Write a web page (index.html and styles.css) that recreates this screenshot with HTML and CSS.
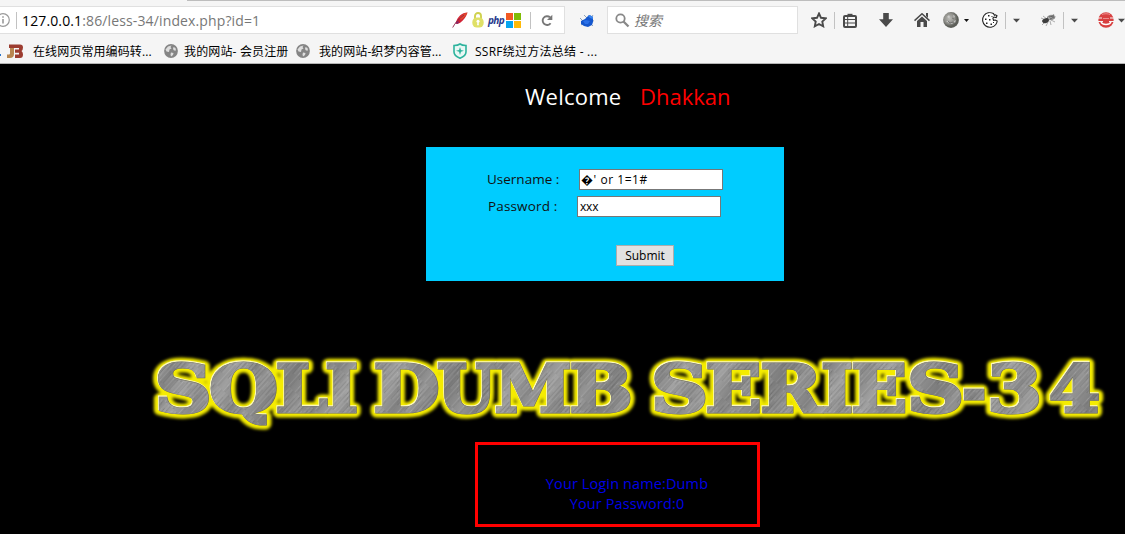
FILE: index.html
```html
<!DOCTYPE html>
<html lang="zh-CN">
<head>
<meta charset="utf-8">
<title>Less-34</title>
<link rel="stylesheet" href="styles.css">
</head>
<body>
<svg class="defs" width="0" height="0" aria-hidden="true">
  <defs>
    <symbol id="globe" viewBox="0 0 14 14"><circle cx="7" cy="7" r="6.900" fill="#858585"/><path d="M1.500 5.500L4 2.500l3.500-1L6.500 3l1 1.500-2 1L5 8 2.500 7.500zM9.500 3l2 1 .5 2.500-2 0-1-1.500zM7 8.500l2.500.5-.5 2-2 1.500-.5-2z" fill="#dedede"/></symbol>
    <symbol id="caret" viewBox="0 0 8 5"><path d="M0 .5h8L4 4.700z" fill="#4a4a4a"/></symbol>
  </defs>
</svg>
<header class="chrome">
  <div class="tabline"></div>
  <div class="nav">
    <div class="urlbar">
      <svg class="info" width="14" height="14" viewBox="0 0 14 14"><circle cx="7" cy="7" r="6.300" fill="none" stroke="#9a9a9a" stroke-width="1.200"/><path d="M7 6v4.500M7 3.300v1.500" stroke="#999" stroke-width="1.600"/></svg>
      <i class="sep url-sep"></i>
      <span class="url"><b>127.0.0.1</b>:86/less-34/index.php?id=1</span>
      <svg class="feather" width="16" height="16" viewBox="0 0 16 16"><path d="M15.500.5C10 .5 5 5 3.500 11.500l2 .5C10 10 14 6 15.500.5z" fill="#d22335"/><path d="M15.500.5C12 1.300 9 3.500 7 6l2 2c3-2 5-4.500 6.500-7.500z" fill="#e75b27" opacity=".65"/><path d="M3.500 11l2.500-2 1 1.500-2 1.500z" fill="#7b2a72"/><path d="M.7 15.500C3 11 7 6.500 12 3" fill="none" stroke="#8e2349" stroke-width=".9"/></svg>
      <svg class="lock" width="12" height="16" viewBox="0 0 12 16"><path d="M3 7V4a3 3 0 016 0v3" fill="none" stroke="#cfd14e" stroke-width="1.900"/><rect x=".3" y="5.500" width="11.400" height="10" rx="4.500" fill="#dfe067"/><circle cx="6" cy="9.300" r="1.500" fill="#fff"/><path d="M5.400 10h1.200l.3 3.200H5.100z" fill="#fff"/></svg>
      <span class="php">php</span>
      <svg class="windows" width="15" height="15" viewBox="0 0 15 15"><path fill="#f25a24" d="M0 0h7v7H0z"/><path fill="#80bc06" d="M8 0h7v7H8z"/><path fill="#05a6f0" d="M0 8h7v7H0z"/><path fill="#ffba08" d="M8 8h7v7H8z"/></svg>
      <i class="sep reload-sep"></i>
      <svg class="reload" width="12" height="13" viewBox="0 0 12 13"><path d="M9.600 9.200A4.400 4.400 0 119 3.300" fill="none" stroke="#777" stroke-width="1.900"/><path d="M11.300.7v5.300H6z" fill="#777"/></svg>
    </div>
    <svg class="bug" width="16" height="15" viewBox="0 0 16 15"><path d="M1 5l3 3M2 12l3-2M5 2l3 3M15 8l-3-1M14 13l-3-3M14 2l-2 3" stroke="#8fa3b8" stroke-width="1"/><path d="M2 8l4-2 2-2 2-2 4 2v5l-1 3-4 2-4-1-3-2z" fill="#1557cd"/><path d="M9 3l2-1 3 2v2l-3-1z" fill="#3984ee"/><path d="M4 8l3-1 4 1-2 3-3 0z" fill="#2a70e8"/></svg>
    <div class="search">
      <svg width="15" height="15" viewBox="0 0 15 15"><circle cx="5.500" cy="5.500" r="4.200" fill="none" stroke="#888" stroke-width="1.800"/><path d="M8.500 8.500l5 5" stroke="#888" stroke-width="2.300"/></svg>
      <span>搜索</span>
    </div>
    <svg class="star" width="16" height="16" viewBox="0 0 16 16"><path d="M8 1.500l2 4.300 4.700.6-3.400 3.200.9 4.700L8 12l-4.200 2.300.9-4.700L1.300 6.400 6 5.800z" fill="none" stroke="#4a4a4a" stroke-width="1.900"/></svg>
    <i class="sep s1"></i>
    <svg class="list" width="14" height="15" viewBox="0 0 14 15"><path d="M4.500 3V.8h5V3" fill="#4a4a4a"/><rect x="1" y="3" width="12" height="11" rx="1" fill="none" stroke="#4a4a4a" stroke-width="2"/><path d="M2 6.500h10M2 10h10" stroke="#4a4a4a" stroke-width="1.200"/><path d="M4.700 3v11" stroke="#4a4a4a"/></svg>
    <svg class="down" width="14" height="14" viewBox="0 0 14 14"><path d="M4.200 0h5.600v6.300H14L7 14 0 6.300h4.200z" fill="#4a4a4a"/></svg>
    <svg class="home" width="16" height="14" viewBox="0 0 16 14"><path d="M.5 7.600L8 .8l7.500 6.800" fill="none" stroke="#4a4a4a" stroke-width="1.500"/><path d="M12 0h2v5l-2-2zM3 7.900l5-4.500 5 4.500V14H9.500V9h-3v5H3z" fill="#4a4a4a"/></svg>
    <svg class="ball" width="16" height="16" viewBox="0 0 16 16"><defs><radialGradient id="ballfill" cx=".4" cy=".4"><stop offset="0" stop-color="#bdbdb9"/><stop offset=".65" stop-color="#8f8f8a"/><stop offset="1" stop-color="#5c5e58"/></radialGradient></defs><circle cx="8" cy="8" r="7.900" fill="url(#ballfill)"/><path d="M4 5l2-2 1 2-1 1zM10 3l2 1-1 2M3 9l2 0 1 2M11 9l2-1-1 3-1-1zM7 12l2-1 1 1z" fill="#ddd" opacity=".7"/><path d="M5 9l2 2 3-1M9 6l2 1" stroke="#666" fill="none" stroke-width=".7"/></svg>
    <svg class="mini" width="5" height="3"><path d="M0 0h5L2.500 3z" fill="#111"/></svg>
    <svg class="cookie" width="16" height="16" viewBox="0 0 16 16"><path d="M11.500 1.600C8 0 4 .7 2 3.500-.3 7 .4 11.500 3.500 13.800c3.500 2.500 8 1.600 10.300-1.300.8-1 1.200-2.200 1.400-3.500l-2-1-1.700.4-.6-2.200 1-1.200 2.300.6.8-1.800-1.500-1-1 .5z" fill="#fff" stroke="#222" stroke-width="1.100"/><path d="M6 3h1.500v1.500H6zM3 6.500h1.500V8H3zM7 7h1.500v1.500H7zM4 10.500h1.500V12H4zM8.500 11.500H10V13H8.500zM11 10h1v1h-1zM9.500 4h1v1h-1z" fill="#222"/></svg>
    <i class="sep s2"></i>
    <svg class="caret c2" width="7" height="5"><use href="#caret"/></svg>
    <svg class="fly" width="16" height="14" viewBox="0 0 16 14"><path d="M1 5l5 2M2 12l4-4M6 13l2-4M11 12l-1-4M15 9l-4-2M3 3l4 3M14 1l-3 4" stroke="#999" stroke-width=".8"/><ellipse cx="11" cy="4.500" rx="4" ry="2.200" transform="rotate(-12 11 4)" fill="#aaa" stroke="#666" stroke-width=".6"/><ellipse cx="5.500" cy="7.500" rx="3.500" ry="2.400" transform="rotate(-20 6 7.500)" fill="#3c3c3c"/><path d="M9 4l5-1M10 6l4-2" stroke="#444" stroke-width=".7"/></svg>
    <i class="sep s3"></i>
    <svg class="caret c2" width="7" height="5"><use href="#caret"/></svg>
    <svg class="red" width="16" height="16" viewBox="0 0 16 16"><circle cx="8" cy="8" r="7.700" fill="#d84040"/><path d="M4 2.500c2-1 6-1 8 0" fill="none" stroke="#ec8e8e"/><path d="M0 6h4M12 6h4M0 9.500h5M11 9.500h5" stroke="#f5f5f5" stroke-width="1.200"/><path d="M5 6.500h6" stroke="#f0a0a0" stroke-width=".8"/><path d="M3 10c1.500 3.400 8.500 3.400 10 0" fill="none" stroke="#fff" stroke-width="1.500"/></svg>
    <svg class="caret c3" width="7" height="5"><use href="#caret"/></svg>
  </div>
  <div class="bookmarks">
    <i class="dot"></i>
    <svg class="jb" width="16" height="14" viewBox="0 0 16 14"><path d="M3 4h4v6q0 4-4 4H0v-3.500h2q1 0 1-1z" fill="#b88650"/><path d="M2 .5h11q3 0 3 3 0 2.300-1.500 3.500Q16 8 16 10.500q0 3.500-3 3.500H8v-3.500h4V8.700H8V5.500h4V4H2z" fill="#9c3c30"/></svg>
    <span class="b1">在线网页常用编码转...</span>
    <svg class="g1" width="14" height="14"><use href="#globe"/></svg>
    <span class="b2">我的网站- 会员注册</span>
    <svg class="g2" width="14" height="14"><use href="#globe"/></svg>
    <span class="b3">我的网站-织梦内容管...</span>
    <svg class="shield" width="14" height="16" viewBox="0 0 14 16"><path d="M7 1c2 1.500 4 1.500 6 1.500V9c0 3-3 5-6 6.200C4 14 1 12 1 9V2.500C3 2.500 5 2.500 7 1z" fill="#e9f8f5" stroke="#2db39d" stroke-width="1.600"/><path d="M7 4l1 3 3 .7-3 1L7 12 6 8.700l-3-1L6 7z" fill="#2db39d"/></svg>
    <span class="b4">SSRF绕过方法总结 - ...</span>
  </div>
</header>
<main class="page">
  <h1 class="welcome"><span class="hello">Welcome</span><span class="name">Dhakkan</span></h1>
  <form class="login">
    <div class="row user"><label for="u">Username :</label><input id="u" type="text" value="&#xFFFD;' or 1=1#"></div>
    <div class="row pass"><label for="p">Password :</label><input id="p" type="text" value="xxx"></div>
    <button type="button">Submit</button>
  </form>
  <svg class="banner" width="970" height="90" viewBox="145 345 970 90" role="img" aria-label="SQLI DUMB SERIES-34">
    <defs>
      <linearGradient id="metal" gradientUnits="userSpaceOnUse" x1="150" y1="340" x2="210" y2="376" spreadMethod="reflect">
        <stop offset="0" stop-color="#7c7c7c"/><stop offset=".3" stop-color="#949494"/><stop offset=".5" stop-color="#828282"/><stop offset=".75" stop-color="#a0a0a0"/><stop offset="1" stop-color="#8a8a8a"/>
      </linearGradient>
      <pattern id="brush" width="9" height="47" patternUnits="userSpaceOnUse" patternTransform="rotate(42)">
        <path d="M1 0v34M4.700 10v37M7 0v15" stroke="#fff" stroke-opacity=".16" stroke-width=".7"/><path d="M2.800 0v22M6 20v27M8.300 5v30" stroke="#333" stroke-opacity=".2" stroke-width=".7"/>
      </pattern>
      <filter id="glow" filterUnits="userSpaceOnUse" x="145" y="345" width="970" height="90"><feGaussianBlur stdDeviation="1.600"/></filter>
      <g id="letters">
        <text x="154.500" y="411.500" textLength="57" lengthAdjust="spacingAndGlyphs">S</text>
        <text x="209" y="411.500" textLength="69" lengthAdjust="spacingAndGlyphs">Q</text>
        <text x="275.500" y="411.500" textLength="52" lengthAdjust="spacingAndGlyphs">L</text>
        <text x="325" y="411.500" textLength="33" lengthAdjust="spacingAndGlyphs">I</text>
        <text x="373.500" y="411.500" textLength="66" lengthAdjust="spacingAndGlyphs">D</text>
        <text x="437" y="411.500" textLength="59" lengthAdjust="spacingAndGlyphs">U</text>
        <text x="494.500" y="411.500" textLength="77" lengthAdjust="spacingAndGlyphs">M</text>
        <text x="569.500" y="411.500" textLength="63" lengthAdjust="spacingAndGlyphs">B</text>
        <text x="651" y="411.500" textLength="57" lengthAdjust="spacingAndGlyphs">S</text>
        <text x="705.500" y="411.500" textLength="56" lengthAdjust="spacingAndGlyphs">E</text>
        <text x="760.500" y="411.500" textLength="61" lengthAdjust="spacingAndGlyphs">R</text>
        <text x="821" y="411.500" textLength="32" lengthAdjust="spacingAndGlyphs">I</text>
        <text x="851" y="411.500" textLength="56" lengthAdjust="spacingAndGlyphs">E</text>
        <text x="907" y="411.500" textLength="57" lengthAdjust="spacingAndGlyphs">S</text>
        <text x="962" y="411.500" textLength="24" lengthAdjust="spacingAndGlyphs">-</text>
        <text x="987" y="411.500" textLength="55" lengthAdjust="spacingAndGlyphs">3</text>
        <text x="1049" y="411.500" textLength="51" lengthAdjust="spacingAndGlyphs">4</text>
      </g>
    </defs>
    <use href="#letters" class="halo"/>
    <use href="#letters" class="edge"/>
    <use href="#letters" class="shade"/>
    <use href="#letters" class="face"/>
    <use href="#letters" class="grain"/>
  </svg>
  <section class="result"><div>Your Login name:Dumb</div><div>Your Password:0</div></section>
</main>
</body>
</html>
```
FILE: styles.css
```css
* { box-sizing: border-box; }
body { margin: 0; width: 1125px; height: 534px; overflow: hidden; background: #000; font-family: "Open Sans", "Noto Sans CJK SC", sans-serif; }
svg { display: block; flex: none; }
.defs { position: absolute; }
.chrome { height: 64px; background: #f5f5f5; border-bottom: 1px solid #b5b5b5; overflow: hidden; }
.tabline { height: 1px; margin-left: 187px; background: #bdbdbd; }
.nav { height: 38px; display: flex; align-items: center; }
.sep { flex: none; width: 1px; height: 17px; background: #c2c2c2; }
.urlbar { flex: none; width: 565px; height: 28px; display: flex; align-items: center; background: #fff; border: 1px solid #e0e0e0; border-left: 0; white-space: nowrap; }
.info { margin-left: -4px; }
.url-sep { margin-left: 6px; }
.url { width: 426px; margin-left: 5px; font-size: 14px; letter-spacing: .13px; color: #777; }
.url b { font-weight: 400; color: #000; }
.feather { margin-left: 4px; }
.lock { margin-left: 4px; }
.php { width: 17px; margin-left: 4px; font: italic 700 10px/14px "Open Sans", sans-serif; letter-spacing: -.6px; color: #26398c; }
.windows { margin-left: 1px; }
.reload-sep { margin-left: 9px; }
.reload { margin-left: 10px; }
.bug { margin-left: 14px; }
.search { flex: none; width: 191px; height: 28px; margin-left: 12px; padding-left: 7px; display: flex; align-items: center; gap: 4px; background: #fff; border: 1px solid #e0e0e0; }
.search span { font-size: 14px; font-style: italic; color: #777; }
.star { margin-left: 13px; }
.s1 { margin-left: 7px; }
.list { margin-left: 8px; }
.down { margin-left: 22px; }
.home { margin-left: 21px; }
.ball { margin-left: 13px; }
.mini { margin-left: 5px; }
.cookie { margin-left: 13px; }
.s2 { margin-left: 7px; }
.c2 { margin-left: 7px; }
.fly { margin-left: 20px; }
.s3 { margin-left: 7px; }
.red { margin-left: 20px; }
.c3 { margin-left: 4px; }
.bookmarks { height: 24px; display: flex; align-items: center; font: 12px/20px "Open Sans", "Noto Sans CJK SC", sans-serif; color: #000; white-space: nowrap; }
.bookmarks span { flex: none; padding-top: 1px; }
.dot { width: 1px; height: 2px; margin-top: 8px; background: #2a75c9; }
.jb { margin-left: 6px; }
.b1 { width: 119px; margin-left: 10px; letter-spacing: .1px; }
.g1 { margin-left: 12px; }
.b2 { width: 106px; margin-left: 6px; letter-spacing: .15px; }
.g2 { margin-left: 6px; }
.b3 { width: 123px; margin-left: 9px; letter-spacing: .1px; }
.shield { margin-left: 11px; }
.b4 { margin-left: 8px; letter-spacing: .25px; }
.page { height: 470px; }
.welcome { margin: 0; height: 83px; padding: 16px 0 0 525px; display: flex; font: 400 22px/32px "Open Sans", sans-serif; }
.hello { width: 115px; letter-spacing: .25px; color: #fff; }
.name { color: #f00; }
.login { width: 358px; height: 134px; margin-left: 426px; padding-top: 22px; background: #0cf; }
.row { display: flex; height: 21px; }
.row label { font: 13.500px/20px "Open Sans", sans-serif; color: #111; }
.user { padding-left: 61px; }
.user label { width: 92px; }
.pass { margin-top: 6px; padding-left: 62px; }
.pass label { width: 89px; letter-spacing: .15px; }
.row input { width: 144px; height: 21px; padding: 0 2px; border: 1px solid #777; background: #fff; color: #000; font: 12px/19px "Open Sans", "DejaVu Sans", sans-serif; }
#u { padding-left: 1px; letter-spacing: .55px; }
#p { letter-spacing: -.2px; }
.login button { display: block; width: 58px; height: 21px; margin: 28px 0 0 190px; padding: 0; border: 1px solid #adadad; background: #e1e1e1; color: #000; font: 12px/18px "Open Sans", sans-serif; }
.banner { margin: 64px 0 0 145px; }
.banner text { font: 700 65.500px "DejaVu Serif", serif; }
.halo { fill: #f5ec00; stroke: #f5ec00; stroke-width: 11px; stroke-linejoin: round; filter: url(#glow); }
.edge { fill: #fbf8c0; stroke: #fbf8c0; stroke-width: 3.600px; transform: translate(-.4px, -.4px); }
.shade { fill: #6d6a4d; stroke: #6d6a4d; stroke-width: 3.200px; transform: translate(.3px, .4px); }
.face { fill: url(#metal); stroke: url(#metal); stroke-width: 2.600px; }
.grain { fill: url(#brush); stroke: url(#brush); stroke-width: 2.600px; }
.result { width: 285px; height: 85px; margin: 7px 0 0 475px; padding: 29px 0 0 19px; border: 3px solid #f00; color: #0000e6; font: 14.500px/20px "Open Sans", sans-serif; letter-spacing: .12px; text-align: center; }
```
